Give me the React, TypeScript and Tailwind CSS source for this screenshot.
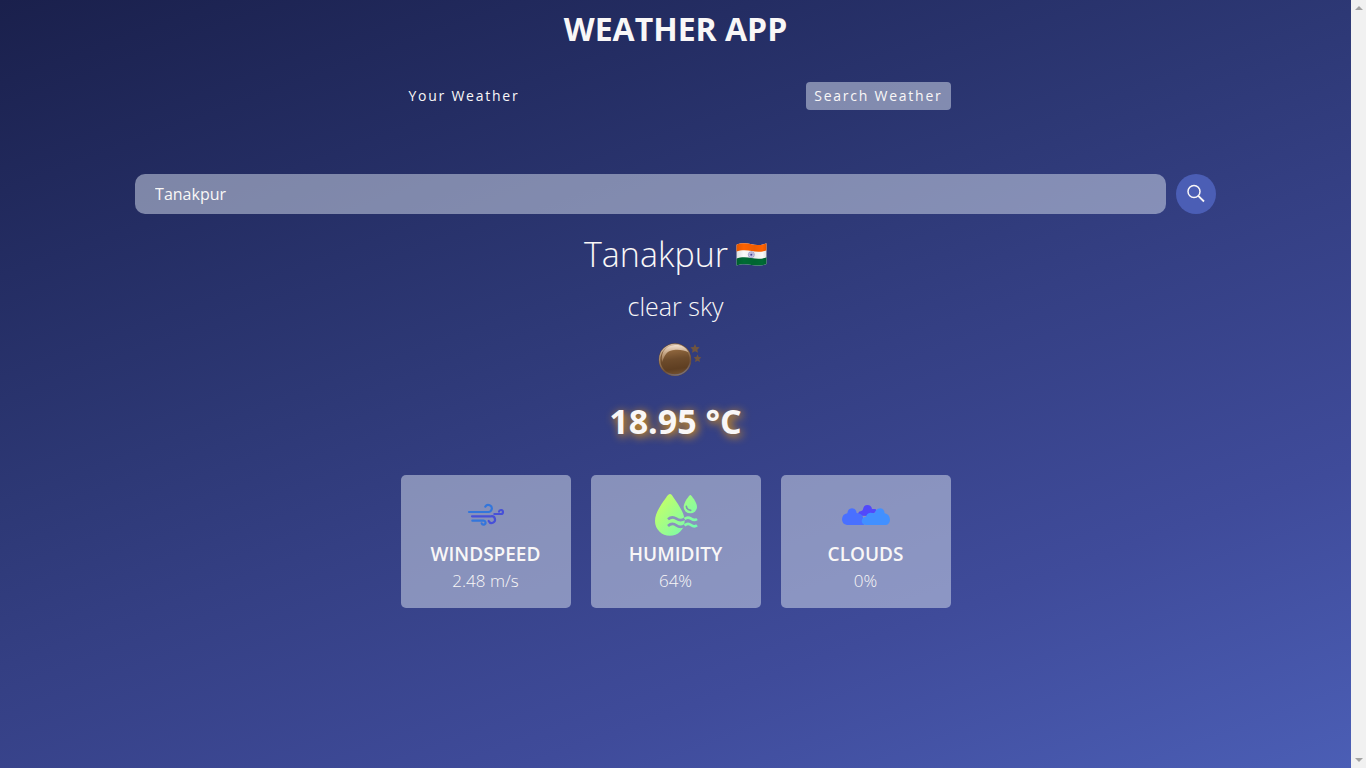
import { useState } from "react";
import type { FormEvent, ReactNode } from "react";

function FlagIndia() {
  return (
    <svg viewBox="0 0 93 69" className="h-[23px] w-[31px]" role="img" aria-label="India">
      <defs>
        <clipPath id="flag-wave">
          <path d="M1 5 C16 -1 32 0 47 4 S78 6 92 1 V63 C78 69 62 69 47 66 S16 62 1 68 Z" />
        </clipPath>
        <linearGradient id="flag-fold" x1="0" x2="1" y1="0" y2="0">
          <stop offset="0" stopColor="#000" stopOpacity=".12" />
          <stop offset=".25" stopColor="#000" stopOpacity="0" />
          <stop offset=".6" stopColor="#000" stopOpacity=".06" />
          <stop offset=".85" stopColor="#000" stopOpacity="0" />
          <stop offset="1" stopColor="#000" stopOpacity=".12" />
        </linearGradient>
      </defs>
      <g clipPath="url(#flag-wave)">
        <path fill="#fafafa" d="M0 0h93v69H0z" />
        <path fill="#ff6200" d="M0 0H93V22 C78 27 62 27 47 24 S16 20 0 26 Z" />
        <path fill="#006b34" d="M0 47 C16 41 32 42 47 45 S78 48 93 43 V69 H0 Z" />
        <path fill="url(#flag-fold)" d="M0 0h93v69H0z" />
      </g>
      <circle cx="46" cy="35" r="9" fill="#d5d3ea" stroke="#8a85c0" strokeWidth="2" />
      <path stroke="#8983c1" strokeWidth="1.2" d="M46 27v16M38 35h16M40.500 29.500l11 11M51.500 29.500l-11 11" />
      <circle cx="46" cy="35" r="2.800" fill="#45408f" />
    </svg>
  );
}

function MoonIcon() {
  return (
    <svg viewBox="33 14 150 150" className="size-[50px]" role="img" aria-label="clear sky">
      <defs>
        <linearGradient id="moon-face" x1=".42" y1="0" x2=".55" y2="1">
          <stop offset="0" stopColor="#c9a47f" />
          <stop offset=".22" stopColor="#8b633b" />
          <stop offset=".48" stopColor="#6d4b2b" />
          <stop offset=".8" stopColor="#5e3e21" />
          <stop offset="1" stopColor="#735130" />
        </linearGradient>
        <linearGradient id="moon-edge" x1=".2" y1="0" x2=".6" y2="1">
          <stop offset="0" stopColor="#d9c4ae" />
          <stop offset=".45" stopColor="#9a7856" />
          <stop offset=".75" stopColor="#6f5038" />
          <stop offset="1" stopColor="#777079" />
        </linearGradient>
        <linearGradient id="moon-shine" x1="0" y1="0" x2="0" y2="1">
          <stop offset="0" stopColor="#f3e3d3" stopOpacity=".95" />
          <stop offset="1" stopColor="#c49a70" stopOpacity=".45" />
        </linearGradient>
      </defs>
      <circle cx="105" cy="88" r="49" fill="#6a4b31" />
      <circle cx="105" cy="88" r="46" fill="url(#moon-face)" stroke="url(#moon-edge)" strokeWidth="4" />
      <path d="M66 96 C61 63 80 45 105 44 C124 43 139 51 145 66 C128 56 90 54 78 71 C72 79 69 88 66 96Z" fill="url(#moon-shine)" />
      <path fill="#71553e" d="M165 41l4 9 10 1-7 7 2 9-9-4-9 4 2-9-7-7 10-1zM173 72l3 8 8 1-6 6 2 8-7-4-8 4 2-8-6-6 8-1z" />
    </svg>
  );
}

function WindIcon() {
  return (
    <svg viewBox="18 0 150 150" className="size-[50px]" fill="none" strokeWidth="6.500" strokeLinecap="round" aria-hidden="true">
      <g stroke="#3376dc">
        <path d="M42 66H99A10.500 10.500 0 1 0 91 50" />
        <path d="M52 92H85A6 6 0 1 1 80 100" />
      </g>
      <g stroke="#4750d8">
        <path d="M51 79H108A10 10 0 1 1 101 93" />
        <path d="M118 72H138A6 6 0 1 0 132 65" />
      </g>
    </svg>
  );
}

function HumidityIcon() {
  return (
    <svg viewBox="33 15 150 150" className="size-[50px]" aria-hidden="true">
      <defs>
        <linearGradient id="drop-fill" gradientUnits="userSpaceOnUse" x1="55" y1="50" x2="165" y2="140">
          <stop offset="0" stopColor="#c3ff68" />
          <stop offset="1" stopColor="#70fbb5" />
        </linearGradient>
        <mask id="wave-gap">
          <path fill="#fff" d="M30 10h160v160H30z" />
          <g fill="none" stroke="#000" strokeWidth="8">
            <path d="M84 103q12-11 25-2t25 0" />
            <path d="M84 123q12-11 25-2t25 0" />
          </g>
        </mask>
      </defs>
      <g fill="url(#drop-fill)">
        <path mask="url(#wave-gap)" d="M90 27C94 27 97 32 101 38C117 61 134 86 134 108A44.500 44.500 0 0 1 45 108C45 86 61 61 78 38C83 31 86 27 90 27Z" />
        <path d="M151 30C154 30 171 53 171 65A20 20 0 0 1 131 65C131 53 148 30 151 30Z" />
      </g>
      <path d="M139 64c1 7 6 11 13 12" fill="none" stroke="#7f99ae" strokeWidth="5" strokeLinecap="round" />
      <g fill="none" stroke="url(#drop-fill)" strokeWidth="8">
        <path d="M134 102q9-8 19-1t18 1" />
        <path d="M134 122q9-10 19-2t18 1" />
      </g>
    </svg>
  );
}

function CloudsIcon() {
  return (
    <svg viewBox="33 0 150 150" className="size-[50px]" aria-hidden="true">
      <path fill="#5149fb" d="M91 77Q84 77 84 71Q85 64 94 63Q99 62 99 58Q101 45 112 45Q124 45 126 57H136Q140 59 138 64Q136 69 129 70L119 78Z" />
      <path fill="#4970ff" d="M51 105Q36 103 36 88Q37 72 52 70Q54 55 66 55Q78 55 80 69Q96 70 99 82L102 105Z" />
      <path fill="#4290ff" d="M109 105Q96 105 95 94Q95 82 108 80Q110 69 121 68Q130 69 134 70Q138 55 151 55Q163 56 164 70Q179 73 180 89Q179 104 166 105Z" />
    </svg>
  );
}

function StatCard({ icon, title, value }: { icon: ReactNode; title: string; value: string }) {
  return (
    <article className="flex flex-1 flex-col items-center rounded-[5px] bg-[#dae2ef]/50 py-[15px]">
      {icon}
      <h3 className="text-[19px] leading-[29px] font-semibold">{title}</h3>
      <p className="text-[17px] leading-[24px] font-light">{value}</p>
    </article>
  );
}

export default function App() {
  const [city, setCity] = useState("Tanakpur");
  const submit = (event: FormEvent) => event.preventDefault();

  return (
    <div className="flex min-h-screen font-['Open_Sans','Noto_Sans',sans-serif] text-[#f9f7f7]">
      <main className="flex flex-1 flex-col items-center bg-[linear-gradient(160deg,#1a204c_0%,#242d63_22%,#2d3875_40%,#343f83_53%,#3f4b9a_76%,#4b5eb5_100%)]">
        <h1 className="py-2 text-[32px] leading-[42px] font-bold">WEATHER APP</h1>

        <nav className="mt-6 flex w-full max-w-[550px] justify-between text-[14px] leading-[20px] font-medium tracking-[1.75px]">
          <button type="button" className="rounded-[4px] px-2 py-1">Your Weather</button>
          <button type="button" aria-current="page" className="rounded-[4px] bg-[#dae2ef]/50 px-2 py-1">Search Weather</button>
        </nav>

        <form onSubmit={submit} className="mt-16 flex w-4/5 items-center gap-[10px]">
          <input
            aria-label="Search for city"
            value={city}
            onChange={(event) => setCity(event.target.value)}
            className="h-10 min-w-0 flex-1 rounded-[10px] bg-[#dae2ef]/50 px-5 text-[16px] font-medium outline-none"
          />
          <button type="submit" aria-label="Search" className="flex size-10 items-center justify-center rounded-full bg-[#4b5eb5]">
            <svg viewBox="0 0 20 20" className="size-5" fill="none" stroke="#f9f7f7" strokeWidth="1.500" aria-hidden="true">
              <circle cx="8" cy="7.500" r="6" />
              <path d="M12.300 11.800L18 17.500" strokeWidth="1.800" />
            </svg>
          </button>
        </form>

        <section className="flex w-full flex-col items-center px-4">
          <div className="mt-[17px] flex items-center gap-2">
            <h2 className="text-[34px] leading-[46px] font-light">Tanakpur</h2>
            <FlagIndia />
          </div>
          <p className="mt-3 text-[25px] leading-[34px] font-light">clear sky</p>
          <div className="mt-3">
            <MoonIcon />
          </div>
          <p className="mt-[14px] text-[34px] leading-[44px] font-bold [text-shadow:2px_2px_10px_#ffa600]">18.95 °C</p>
          <div className="mt-8 flex w-full max-w-[550px] gap-5">
            <StatCard icon={<WindIcon />} title="WINDSPEED" value="2.48 m/s" />
            <StatCard icon={<HumidityIcon />} title="HUMIDITY" value="64%" />
            <StatCard icon={<CloudsIcon />} title="CLOUDS" value="0%" />
          </div>
        </section>
      </main>

      <div className="flex w-[15px] flex-col items-center justify-between bg-[#f1f1f1] py-[6px]" aria-hidden="true">
        <svg viewBox="0 0 8 4" className="h-1 w-2" fill="#a3a3a3"><path d="M4 0l4 4H0z" /></svg>
        <svg viewBox="0 0 8 4" className="h-1 w-2" fill="#a3a3a3"><path d="M4 4l4-4H0z" /></svg>
      </div>
    </div>
  );
}
